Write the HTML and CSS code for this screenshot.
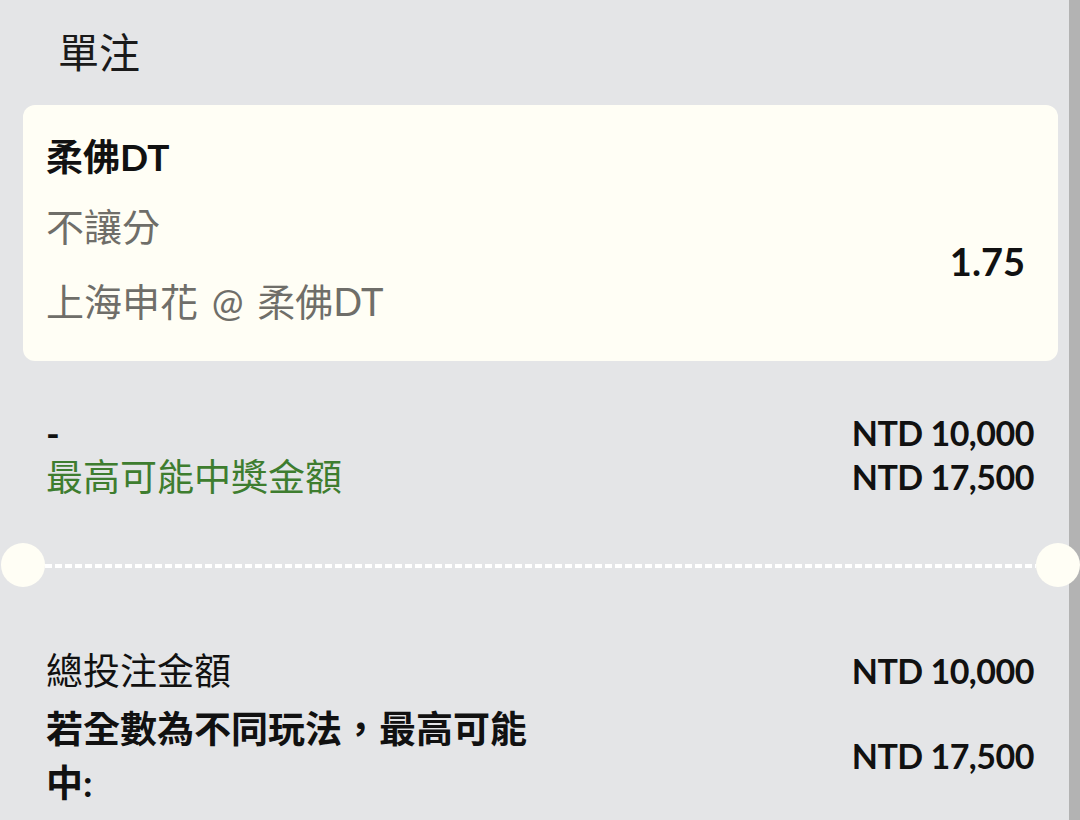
FILE: index.html
```html
<!DOCTYPE html>
<html lang="zh-Hant">
<head>
  <meta charset="UTF-8" />
  <title>單注</title>
  <link rel="stylesheet" href="styles.css">
</head>
<body>

  <div class="page">
    <h1 class="title">單注</h1>

    <!-- selection card -->
    <div class="card">
      <div class="team">柔佛DT</div>
      <div class="card-row">
        <div class="card-info">
          <div class="market">不讓分</div>
          <div class="match">上海申花 @ 柔佛DT</div>
        </div>
        <div class="odds">1.75</div>
      </div>
    </div>

    <div class="summary">
      <div class="line">
        <span class="label dash">-</span>
        <span class="amount">NTD 10,000</span>
      </div>
      <div class="line">
        <span class="label win">最高可能中獎金額</span>
        <span class="amount">NTD 17,500</span>
      </div>
    </div>

    <div class="divider">
      <span class="notch notch-left"></span>
      <span class="dashes"></span>
      <span class="notch notch-right"></span>
    </div>

    <div class="totals">
      <div class="total-row">
        <span class="total-label">總投注金額</span>
        <span class="amount">NTD 10,000</span>
      </div>
      <div class="total-row">
        <span class="total-label strong">若全數為不同玩法，最高可能中:</span>
        <span class="amount">NTD 17,500</span>
      </div>
    </div>
  </div>

</body>
</html>
```

FILE: styles.css
```css
body {
  margin: 0;
  font-family: Lato, "Noto Sans CJK TC", sans-serif;
  color: #111;
  background: linear-gradient(to left, #b3b3b3 11px, #e4e5e7 11px);
  min-height: 820px;
  overflow: hidden;
}
.page {
  padding: 0 22px 0 23px;
}
.title {
  margin: 0;
  padding-left: 35px;
  font-size: 41px;
  font-weight: normal;
  line-height: 105px;
  color: #1a1a1a;
}
.card {
  background: #fffef5;
  border-radius: 12px;
  padding: 20px 33px 22px 23px;
}
.team {
  font-size: 37px;
  font-weight: bold;
  line-height: 64px;
}
.card-row {
  display: flex;
  justify-content: space-between;
  align-items: center;
}
.market, .match {
  font-size: 38px;
  line-height: 75px;
  color: #6f6e69;
}
.match {
  word-spacing: 4px;
}
.odds {
  font-size: 38px;
  font-weight: bold;
  margin-top: -6px;
}
.summary {
  margin-top: 50px;
  padding: 0 24px 0 23px;
}
.line, .total-row {
  display: flex;
  justify-content: space-between;
  align-items: center;
}
.line {
  font-size: 37px;
  line-height: 44px;
}
.amount {
  font-weight: bold;
  font-size: 34px;
  letter-spacing: -0.5px;
}
.dash {
  font-weight: bold;
}
.win {
  color: #3e7d2f;
}
.divider {
  display: flex;
  align-items: center;
  margin-top: 44px;
  height: 44px;
}
.notch {
  width: 44px;
  height: 44px;
  border-radius: 50%;
  background: #fffef5;
  flex: none;
}
.notch-left {
  margin-left: -22px;
}
.notch-right {
  margin-right: -22px;
}
.dashes {
  flex: 1;
  height: 4px;
  margin-top: 2px;
  background: repeating-linear-gradient(to right, #fff 0 7px, transparent 7px 10px);
}
.totals {
  margin-top: 57px;
  padding: 0 24px 0 23px;
}
.total-row {
  font-size: 37px;
  line-height: 54px;
}
.total-row + .total-row {
  margin-top: 4px;
}
.total-label {
  max-width: 500px;
}
.strong {
  font-weight: bold;
}
```
